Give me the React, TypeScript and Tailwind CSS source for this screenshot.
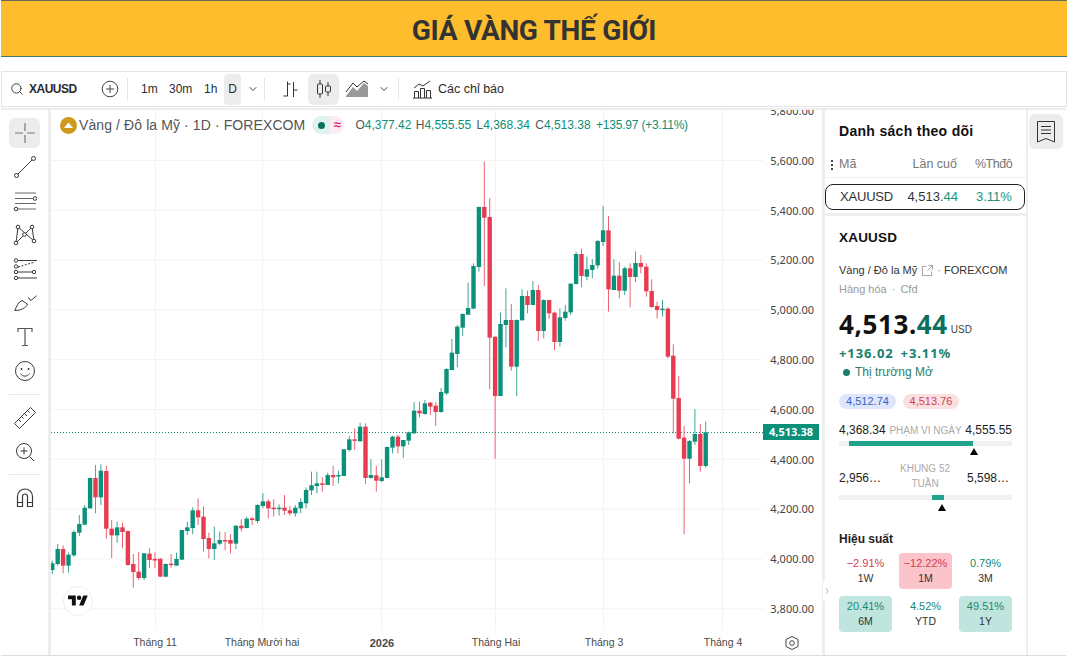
import React from 'react';
import { ChevronDown, Search } from 'lucide-react';

// candle data read off the picture: [wick top, body top, body bottom, wick bottom]
type Candle = [string, number, number, number, number];

const partA: Candle[] = [
  ['g',482,490,510,522],['g',432,447,492,497],['r',436,447,497,520],['g',458,464,497,518],['g',390,396,466,470],
  ['g',345,372,398,408],['g',315,323,374,376],['g',232,234,325,327],['r',195,234,292,340],['g',193,212,292,315],
  ['r',198,213,386,416],['r',360,386,406,474],['g',365,382,406,428],['r',368,382,396,445],['r',393,393,495,497],
  ['r',462,492,516,563],['r',456,515,534,540],['g',460,460,534,540],['r',445,461,480,505],['r',457,477,478,505],
  ['r',476,476,530,530],['g',490,492,530,532],['r',462,491,495,503],['g',458,477,497,497],['g',390,390,479,480],
  ['g',365,382,393,405],['g',322,331,384,403],['r',295,331,352,375],['r',320,350,417,455],['r',398,414,447,475],
  ['g',380,430,447,480],['g',395,420,431,435],['r',396,420,422,450],['r',402,420,431,460],['g',376,377,431,447],
  ['r',358,377,385,395],['g',350,356,384,385],['r',352,355,360,375],['g',313,315,363,370],['g',280,304,318,325],
  ['r',298,304,325,355],['r',298,323,327,350],['g',313,323,327,347],['r',285,323,332,345],['r',318,331,340,347],
  ['g',315,323,340,350],['g',295,306,325,340],['g',262,270,310,325],['g',215,256,271,285],['g',215,250,258,280],
  ['r',232,250,252,275],['g',218,225,255,255],['r',198,225,232,258],['g',212,225,229,250],['g',148,148,228,228],
  ['g',108,118,150,155],['r',85,118,122,150],['g',68,80,124,124],['r',70,80,234,252],['g',178,225,234,235],
  ['r',198,226,242,275],['g',178,232,243,247],['g',140,141,234,234],['g',107,110,143,160],['r',105,110,139,160],
  ['g',120,120,139,173],['g',95,97,122,135],
  ['g',6,32,100,102],['r',5,32,40,52],['g',0,10,42,44],['r',6,8,20,45],['r',6,17,36,78],['g',-36,-24,36,38],
];

const partB: Candle[] = [
  ['g',655,657,730,735],['g',567,608,660,660],['g',525,530,612,652],['g',490,492,533,558],['g',398,474,494,494],
  ['g',340,348,476,476],['g',170,171,351,365],['r',35,171,203,408],['r',145,201,563,718],['r',560,560,738,926],
  ['g',488,522,738,738],['g',415,510,525,592],['r',462,510,650,662],['g',508,510,650,738],['g',418,438,511,511],
  ['r',422,438,465,490],['g',393,420,465,465],['r',405,420,543,573],['g',448,450,543,565],['r',450,450,490,507],
  ['r',485,488,576,600],['g',475,502,576,590],['g',465,485,504,512],['g',400,401,487,495],['g',305,312,402,403],
  ['r',296,312,378,412],['g',320,358,380,390],['g',327,345,360,385],['g',270,273,346,356],['g',168,241,276,288],
  ['r',198,241,418,485],['g',328,377,420,420],['r',337,377,422,445],['g',350,355,422,435],['r',340,355,381,472],
  ['g',304,339,381,396],['r',315,339,351,370],['r',340,350,424,440],['r',388,423,471,473],['r',455,468,480,505],
  ['g',450,476,478,500],['r',472,476,620,625],['r',583,617,746,850],['r',678,744,866,868],
];

const partC: Candle[] = [
  ['r',78,113,176,403],['g',120,123,176,250],['g',28,102,125,135],['r',72,102,198,215],['g',65,97,198,203],
];

const candles = [
  ...partA.map((c) => [c[0], 400 + c[1] / 3, 400 + c[2] / 3, 400 + c[3] / 3, 400 + c[4] / 3] as Candle),
  ...partB.map((c) => [c[0], 150 + c[1] / 3, 150 + c[2] / 3, 150 + c[3] / 3, 150 + c[4] / 3] as Candle),
  ...partC.map((c) => [c[0], 400 + c[1] / 3, 400 + c[2] / 3, 400 + c[3] / 3, 400 + c[4] / 3] as Candle),
];

const GREEN = '#0b9079';
const RED = '#e63b50';

const prices = ['5,800.00', '5,600.00', '5,400.00', '5,200.00', '5,000.00', '4,800.00', '4,600.00', '4,400.00', '4,200.00', '4,000.00', '3,800.00'];

const Chart = () => (
  <svg width="712" height="520" viewBox="52 110 712 520" className="block">
    {[160.5, 210.3, 260.1, 309.9, 359.7, 409.5, 459.3, 509.1, 558.9, 608.7].map((y) => (
      <line key={y} x1="52" x2="764" y1={y} y2={y} stroke="#f3f3f3" />
    ))}
    {[156.5, 263.5, 382.5, 496.5, 604.5, 723.5].map((x) => (
      <line key={x} x1={x} x2={x} y1="110" y2="630" stroke="#f3f3f3" />
    ))}
    <line x1="52" x2="764" y1="432.5" y2="432.5" stroke="#0b9079" strokeDasharray="1 2" />
    {candles.map((c, i) => {
      const x = 53.3 + i * 5.4;
      const color = c[0] === 'g' ? GREEN : RED;
      return (
        <g key={i}>
          <line x1={x} x2={x} y1={c[1]} y2={c[4]} stroke={color} strokeWidth="1" strokeOpacity="0.8" />
          <rect x={x - 2.2} y={c[2]} width="4.4" height={Math.max(c[3] - c[2], 1.5)} fill={color} />
        </g>
      );
    })}
  </svg>
);

const ToolBtn = ({ active, children }: { active?: boolean; children: React.ReactNode }) => (
  <div className="h-[34px] flex items-center justify-center">
    <div className={`w-[31px] h-[30px] rounded-md flex items-center justify-center ${active ? 'bg-[#ececec]' : ''}`}>{children}</div>
  </div>
);

const Ico = ({ children }: { children: React.ReactNode }) => (
  <svg width="24" height="24" viewBox="0 0 24 24" fill="none" stroke="#3a3a3a" strokeWidth="1">
    {children}
  </svg>
);

const LeftToolbar = () => (
  <div className="w-[47px] bg-white pt-[6px] shrink-0">
    <ToolBtn active>
      <Ico>
        <path d="M12 2v8M12 14v8M2 12h8M14 12h8" stroke="#777" strokeWidth="1.2" />
      </Ico>
    </ToolBtn>
    <ToolBtn>
      <Ico>
        <circle cx="3.5" cy="20.5" r="2" />
        <circle cx="20.5" cy="3.5" r="2" />
        <path d="M5 19 19 5" />
      </Ico>
    </ToolBtn>
    <ToolBtn>
      <Ico>
        <path d="M2 4h21M2 9.5h18M2 14.5h21M5 20h18" stroke="#666" />
        <circle cx="22" cy="9.5" r="1.8" fill="#fff" />
        <circle cx="3" cy="20" r="1.8" fill="#fff" />
      </Ico>
    </ToolBtn>
    <ToolBtn>
      <Ico>
        <path d="M5 4 3 20M5 4l16 14M19 4l2 14M19 4 3 20" />
        <circle cx="5" cy="4" r="1.8" fill="#fff" />
        <circle cx="19" cy="4" r="1.8" fill="#fff" />
        <circle cx="3" cy="20" r="1.8" fill="#fff" />
        <circle cx="21" cy="18" r="1.8" fill="#fff" />
        <circle cx="11.5" cy="11.5" r="1.8" fill="#fff" />
      </Ico>
    </ToolBtn>
    <ToolBtn>
      <Ico>
        <path d="M5 3.5h19M5 15h17M5 21h19" />
        <path d="M5 10 22 5M5 10h1" strokeDasharray="2 1.5" />
        <circle cx="3" cy="3.5" r="1.7" />
        <circle cx="3" cy="9.5" r="1.7" />
        <circle cx="3" cy="15" r="1.7" />
        <circle cx="3" cy="21" r="1.7" />
        <circle cx="21" cy="15" r="1.7" fill="#fff" />
      </Ico>
    </ToolBtn>
    <ToolBtn>
      <Ico>
        <path d="M1.700 19.500C4 15 5 11 9 9.500l5.500 3.500C13 17 8 19.500 1.700 19.500Z" />
        <path d="m15.300 6.300 2.400 3.400 6-5" />
      </Ico>
    </ToolBtn>
    <ToolBtn>
      <Ico>
        <path d="M5 7V3.500h14V7M12 3.500v17M9 20.500h6" stroke="#555" strokeWidth="1.2" />
      </Ico>
    </ToolBtn>
    <ToolBtn>
      <Ico>
        <circle cx="12" cy="12" r="9.500" />
        <circle cx="8.500" cy="10" r="1" fill="#3a3a3a" stroke="none" />
        <circle cx="15.500" cy="10" r="1" fill="#3a3a3a" stroke="none" />
        <path d="M7.500 14.500c2 3.500 7 3.500 9 0" />
      </Ico>
    </ToolBtn>
    <div className="h-[13px] flex items-center px-2">
      <div className="h-px w-full bg-[#e8e8e8]" />
    </div>
    <ToolBtn>
      <Ico>
        <path d="m1.500 17.500 16-16 5 5-16 16Z" />
        <path d="m5.500 13.500 2.500 2.500M8.500 10.500l2 2M11.500 7.500l2.500 2.500M14.500 4.500l2 2" />
      </Ico>
    </ToolBtn>
    <ToolBtn>
      <Ico>
        <circle cx="11" cy="11" r="7.500" />
        <path d="M11 7.500v7M7.500 11h7M16.500 16.500 21 21" />
      </Ico>
    </ToolBtn>
    <div className="h-[11px] flex items-center px-2">
      <div className="h-px w-full bg-[#e8e8e8]" />
    </div>
    <ToolBtn>
      <Ico>
        <path d="M4.500 21.500v-10a7.500 7.500 0 0 1 15 0v10h-5v-10a2.500 2.500 0 0 0-5 0v10Z" strokeWidth="1.2" />
        <path d="M4.500 17.500h5M14.500 17.500h5" strokeWidth="1.200" />
      </Ico>
    </ToolBtn>
  </div>
);

const TopToolbar = () => (
  <div className="mt-[14px] ml-px mr-[2px] h-[36px] bg-white border border-[#e4e4e4] flex items-center text-[#2b2b2b] text-[12px] shrink-0">
    <Search size={14} strokeWidth={1.6} className="ml-[8px] text-[#333]" />
    <span className="ml-[5px] w-[48px] font-bold text-[12px] tracking-[-0.5px]">XAUUSD</span>
    <svg width="18" height="18" viewBox="0 0 18 18" fill="none" stroke="#444" className="ml-[24px]">
      <circle cx="9" cy="9" r="7.800" />
      <path d="M9 5v8M5 9h8" />
    </svg>
    <div className="ml-[8px] w-px h-[22px] bg-[#e6e6e6]" />
    <span className="ml-[13px] w-[18px]">1m</span>
    <span className="ml-[10px] w-[25px]">30m</span>
    <span className="ml-[10px] w-[14px]">1h</span>
    <span className="ml-[6px] w-[17px] h-[31px] bg-[#ececec] rounded flex items-center justify-center">D</span>
    <ChevronDown size={12} className="ml-[6px] text-[#444]" />
    <div className="ml-[5px] w-px h-[22px] bg-[#e6e6e6]" />
    <svg width="18" height="18" viewBox="0 0 18 18" fill="none" stroke="#333" className="ml-[16px]">
      <path d="M6.500 1.500v14.500M2.500 16h4M6.500 4h3M12.500 2v15M12.500 10h4" />
    </svg>
    <span className="ml-[9px] w-[31px] h-[31px] bg-[#ececec] rounded-md flex items-center justify-center">
      <svg width="18" height="20" viewBox="0 0 18 20" fill="none" stroke="#333">
        <path d="M5 1v4M5 15v4M13 3v4M13 13v4" />
        <rect x="2.500" y="5" width="5" height="10" rx="1" />
        <rect x="10.500" y="7" width="5" height="6" rx="1" />
      </svg>
    </span>
    <svg width="24" height="18" viewBox="0 0 24 18" className="ml-[6px]">
      <path d="M1 16 8 7l4 4 7-8 4 3v11H1Z" fill="#999" />
      <path d="M1 12 8 3l4 4 7-6 4 3" fill="none" stroke="#333" />
    </svg>
    <ChevronDown size={12} className="ml-[9px] text-[#444]" />
    <div className="ml-[8px] w-px h-[22px] bg-[#e6e6e6]" />
    <svg width="19" height="19" viewBox="0 0 19 19" fill="none" stroke="#333" className="ml-[14px]">
      <path d="M1.500 18V11.500h4V18M7.500 18V8.500h4V18M13.500 18V10.500h4V18M0 18h19M1 8l5-4 4 2 7-5" />
    </svg>
    <span className="ml-[6px] text-[12.500px]">Các chỉ báo</span>
  </div>
);

const TimeAxis = () => (
  <div className="h-[25px] w-[712px] flex items-start pt-[5px] text-[10.5px] text-[#4a4a4a]">
    <span className="ml-[73px] w-[62px] text-center">Tháng 11</span>
    <span className="ml-[32px] w-[88px] text-center">Tháng Mười hai</span>
    <span className="ml-[56px] w-[40px] text-center font-bold text-[11px]">2026</span>
    <span className="ml-[64px] w-[60px] text-center">Tháng Hai</span>
    <span className="ml-[54px] w-[48px] text-center">Tháng 3</span>
    <span className="ml-[71px] w-[48px] text-center">Tháng 4</span>
  </div>
);

const ChartPane = () => (
  <div className="flex-1 ml-[3px] mr-[3px] bg-white relative flex overflow-hidden">
    <div className="w-[712px] shrink-0">
      <Chart />
      <TimeAxis />
    </div>
    <div className="flex-1 flex flex-col items-end pr-[8px] -mt-[2px] text-[11px] text-[#444] font-['Noto_Sans',sans-serif]">
      {prices.map((p) => (
        <div key={p} className="h-[49.8px] leading-[4px] pt-[1px] shrink-0">
          {p}
        </div>
      ))}
    </div>

    {/* legend over the chart */}
    <div className="absolute left-[9px] top-[6px] flex items-center h-[18px] whitespace-nowrap">
      <svg width="17" height="17" viewBox="0 0 17 17">
        <circle cx="8.500" cy="8.500" r="8.500" fill="#cf9a1c" />
        <path d="M4 11h9L8.500 5.500Z" fill="#fff" />
        <path d="M3 11.500h11" stroke="#cf9a1c" />
      </svg>
      <span className="ml-[2px] text-[14px] text-[#555] tracking-[0.1px]">Vàng / Đô la Mỹ · 1D · FOREXCOM</span>
      <span className="ml-[7px] w-[18px] h-[18px] rounded-l-full bg-[#e0f2ef] flex items-center justify-center">
        <span className="w-[7px] h-[7px] rounded-full bg-[#0b6f5e]" />
      </span>
      <span className="w-[14px] h-[18px] rounded-r-full bg-[#fcecf2] flex items-center justify-center text-[#d6266e] text-[13px] font-bold">≈</span>
      <span className="ml-[11px] text-[12px] text-[#0b9079]">
        <span className="text-[#555]">O</span>4,377.42 <span className="text-[#555] ml-[1px]">H</span>4,555.55 <span className="text-[#555] ml-[2px]">L</span>4,368.34 <span className="text-[#555] ml-[2px]">C</span>4,513.38 <span className="ml-[2px] tracking-[-0.2px]">+135.97 (+3.11%)</span>
      </span>
    </div>

    {/* last price tag */}
    <div className="absolute left-[712px] top-[314px] w-[56px] h-[16px] bg-[#0b9079] text-white text-[11px] font-bold flex items-center justify-center font-['Noto_Sans',sans-serif]">
      4,513.38
    </div>

    {/* TradingView badge */}
    <div className="absolute left-[12px] top-[476px] w-[30px] h-[30px] rounded-full bg-white border border-[#eeeeee] flex items-center justify-center">
      <svg width="20" height="16" viewBox="0 0 36 28" fill="#111">
        <path d="M14 22H7V11H0V4h14v18ZM28 22h-8l7.500-18h8L28 22Z" />
        <circle cx="20" cy="8" r="4" />
      </svg>
    </div>

    {/* axis settings */}
    <svg width="16" height="16" viewBox="0 0 16 16" fill="none" stroke="#444" className="absolute left-[733px] top-[525px]">
      <path d="M8 1.500 14 4.500v7L8 14.500 2 11.500v-7Z" />
      <circle cx="8" cy="8" r="2.300" />
    </svg>
  </div>
);

const Perf = ({ v, l, tone }: { v: string; l: string; tone: 'g' | 'r' | 'G' | 'R' }) => {
  const bg = tone === 'G' ? 'bg-[#bfe5de]' : tone === 'R' ? 'bg-[#fbc4ca]' : '';
  const fg = tone === 'g' || tone === 'G' ? 'text-[#168a74]' : 'text-[#d23f52]';
  return (
    <div className={`h-[36px] rounded flex flex-col items-center justify-center leading-[15px] ${bg}`}>
      <span className={`text-[11px] ${fg}`}>{v}</span>
      <span className="text-[10.5px] text-[#333]">{l}</span>
    </div>
  );
};

const Watchlist = () => (
  <div className="w-[201px] shrink-0 flex flex-col gap-[3px] overflow-hidden">
    <div className="bg-white h-[103px] shrink-0">
      <div className="pl-[14px] pt-[11px] h-[42px] text-[14px] font-bold text-[#111] tracking-[0.3px]">Danh sách theo dõi</div>
      <div className="h-[26px] flex items-center text-[12.500px] text-[#777] border-b border-[#eeeeee] whitespace-nowrap">
        <span className="w-[14px] pl-[6px] flex flex-col gap-[2px]">
          <span className="w-[2px] h-[2px] bg-[#444]" />
          <span className="w-[2px] h-[2px] bg-[#444]" />
          <span className="w-[2px] h-[2px] bg-[#444]" />
        </span>
        <span className="w-[52px]">Mã</span>
        <span className="w-[66px] text-right">Lần cuố</span>
        <span className="ml-[18px] w-[36px] tracking-[-0.5px]">%Thđô</span>
      </div>
      <div className="mt-[6px] h-[26px] mr-px rounded-lg border border-[#222] flex items-center text-[13px] text-[#333]">
        <span className="pl-[14px] w-[79px] tracking-[-0.2px]">XAUUSD</span>
        <span className="w-[53px] text-right">
          4,513.<span className="text-[#17937c]">44</span>
        </span>
        <span className="ml-[18px] text-[#17937c]">3.11%</span>
      </div>
    </div>
    <div className="bg-white flex-1 px-[14px]">
      <div className="pt-[12px] h-[41px] font-bold text-[13.500px] text-[#111] tracking-[0.2px]">XAUUSD</div>
      <div className="mt-[5px] h-[16px] flex items-center text-[11px] text-[#333] whitespace-nowrap">
        Vàng / Đô la Mỹ
        <svg width="13" height="13" viewBox="0 0 14 14" fill="none" stroke="#999" className="ml-[4px]">
          <path d="M6 2.500H1.500v10h10V8M8 1.500h4.500V6M12.500 1.500 7 7" />
        </svg>
        <span className="mx-[3px] text-[#888]">·</span>
        FOREXCOM
      </div>
      <div className="mt-[3px] h-[16px] text-[11px] text-[#999] flex items-center">
        Hàng hóa<span className="mx-[5px]">·</span>Cfd
      </div>
      <div className="mt-[11px] h-[32px] flex items-end">
        <span className="text-[26px] leading-[32px] font-bold font-['Noto_Sans',sans-serif] text-[#111] tracking-[0.6px]">
          4,513.<span className="text-[#0d6f5d]">44</span>
        </span>
        <span className="ml-[3px] mb-[3px] text-[10px] text-[#444]">USD</span>
      </div>
      <div className="mt-[5px] h-[18px] flex items-center text-[13px] font-bold text-[#17806c] tracking-[0.9px] font-['Noto_Sans',sans-serif]">
        +136.02<span className="ml-[7px]">+3.11%</span>
      </div>
      <div className="h-[18px] flex items-center text-[12px] text-[#2a7f6d]">
        <span className="ml-[4px] w-[7px] h-[7px] rounded-full bg-[#17806c]" />
        <span className="ml-[5px]">Thị trường Mở</span>
      </div>
      <div className="mt-[13px] flex gap-[7px] text-[11px]">
        <span className="w-[57px] h-[15px] rounded-full bg-[#dde6fb] text-[#3f5fc0] flex items-center justify-center">4,512.74</span>
        <span className="w-[56px] h-[15px] rounded-full bg-[#fbe0e2] text-[#d23f52] flex items-center justify-center">4,513.76</span>
      </div>

      <div className="mt-[13px] h-[16px] flex items-center justify-between text-[12px] text-[#222] whitespace-nowrap">
        <span>4,368.34</span>
        <span className="text-[10px] text-[#aaa]">PHẠM VI NGÀY</span>
        <span>4,555.55</span>
      </div>
      <div className="mt-[3px] h-[5px] bg-[#f1f1f1] relative">
        <div className="absolute left-[10px] w-[124px] h-[5px] bg-[#22a38c]" />
        <div className="absolute left-[131px] top-[7px] w-0 h-0 border-x-[4px] border-x-transparent border-b-[7px] border-b-black" />
      </div>

      <div className="mt-[14px] h-[32px] flex items-center text-[12px] text-[#222]">
        <span className="w-[50px] mt-[3px]">2,956…</span>
        <span className="ml-[6px] w-[60px] text-center text-[10px] leading-[15px] text-[#aaa]">KHUNG 52 TUẦN</span>
        <span className="ml-[12px] mt-[3px]">5,598…</span>
      </div>
      <div className="mt-[3px] h-[5px] bg-[#f1f1f1] relative">
        <div className="absolute left-[93px] w-[12px] h-[5px] bg-[#22a38c]" />
        <div className="absolute left-[99px] top-[9px] w-0 h-0 border-x-[4px] border-x-transparent border-b-[7px] border-b-black" />
      </div>

      <div className="mt-[30px] h-[16px] text-[12px] font-bold text-[#222]">Hiệu suất</div>
      <div className="mt-[7px] grid grid-cols-3 gap-x-[7px] gap-y-[7px]">
        <Perf v="−2.91%" l="1W" tone="r" />
        <Perf v="−12.22%" l="1M" tone="R" />
        <Perf v="0.79%" l="3M" tone="g" />
        <Perf v="20.41%" l="6M" tone="G" />
        <Perf v="4.52%" l="YTD" tone="g" />
        <Perf v="49.51%" l="1Y" tone="G" />
      </div>
    </div>
  </div>
);

export default function App() {
  return (
    <div className="w-[1069px] h-[658px] bg-white overflow-hidden flex flex-col font-['Liberation_Sans',Arial,sans-serif]">
      <div className="ml-px mr-[2px] h-[57px] pt-[5px] bg-[#fdbd2d] border-t border-t-[#6b6b5a] border-b border-b-[#3f7f5f] flex items-center justify-center shrink-0">
        <h1 className="text-[28px] font-bold text-[#333333] font-['Roboto',sans-serif] tracking-[-0.3px]">GIÁ VÀNG THẾ GIỚI</h1>
      </div>
      <TopToolbar />
      <div className="relative flex-1 ml-px mr-[3px] mb-[2px] mt-px pt-[2px] bg-[#eeeeee] flex min-h-0 border-b border-[#dddddd]">
        <LeftToolbar />
        <ChartPane />
        <Watchlist />
        <div className="w-[38px] ml-[2px] bg-white shrink-0 pt-[4px] pl-px">
          <div className="w-[34px] h-[35px] rounded-md bg-[#ececec] flex items-center justify-center">
            <svg width="18" height="22" viewBox="0 0 18 22" fill="none" stroke="#333">
              <path d="M.5 .5h17v20.500L9 17.500 .5 21Z" />
              <path d="M4 5.500h10M4 9h10M4 12.500h10" />
            </svg>
          </div>
        </div>
        {/* collapse tab between chart and panel */}
        <div className="absolute left-[822px] top-[472px] w-[7px] h-[22px] bg-white rounded-sm flex items-center justify-center">
          <svg width="4" height="8" viewBox="0 0 4 8" fill="none" stroke="#bbb">
            <path d="m1 1 2 3-2 3" />
          </svg>
        </div>
      </div>
    </div>
  );
}
